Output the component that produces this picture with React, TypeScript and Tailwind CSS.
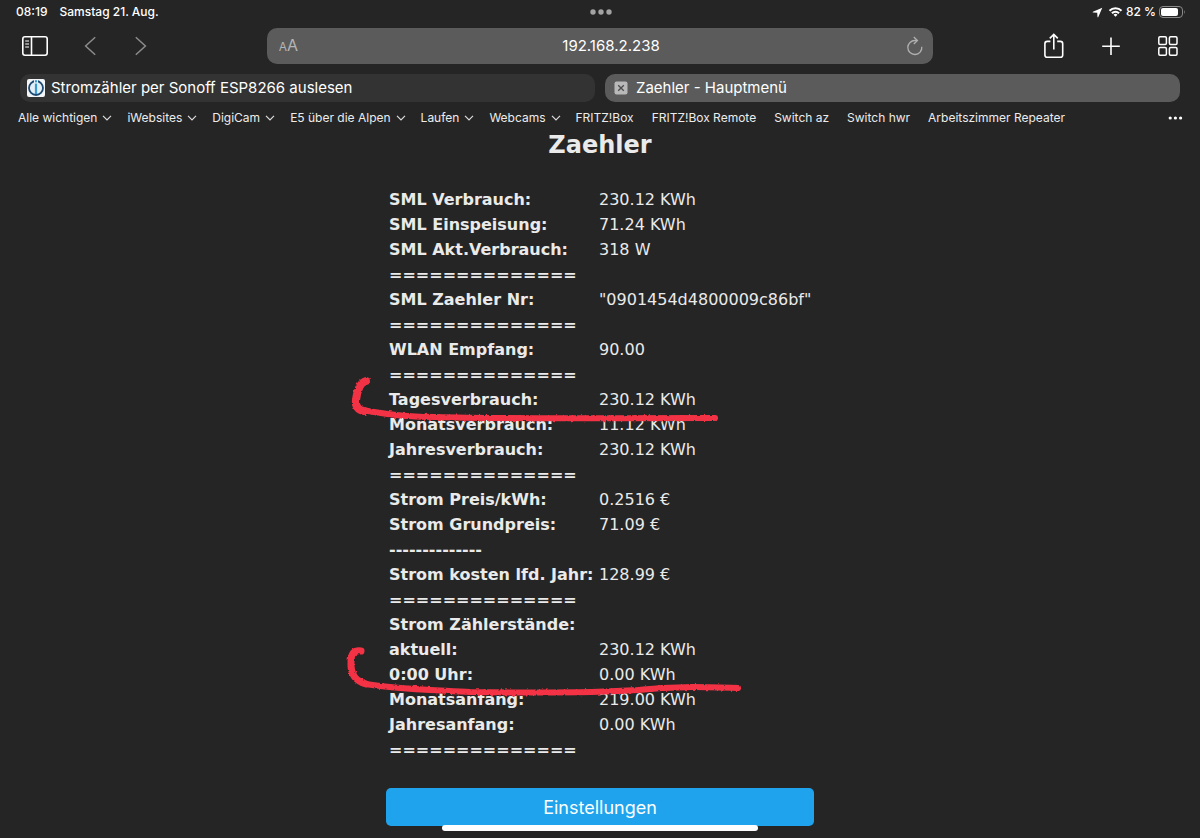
import React from 'react';

interface Bookmark {
  name: string;
  folder?: boolean;
}

interface Reading {
  label: string;
  value?: string;
}

const bookmarks: Bookmark[] = [
  { name: 'Alle wichtigen', folder: true },
  { name: 'iWebsites', folder: true },
  { name: 'DigiCam', folder: true },
  { name: 'E5 über die Alpen', folder: true },
  { name: 'Laufen', folder: true },
  { name: 'Webcams', folder: true },
  { name: 'FRITZ!Box' },
  { name: 'FRITZ!Box Remote' },
  { name: 'Switch az' },
  { name: 'Switch hwr' },
  { name: 'Arbeitszimmer Repeater' },
];

const readings: Reading[] = [
  { label: 'SML Verbrauch:', value: '230.12 KWh' },
  { label: 'SML Einspeisung:', value: '71.24 KWh' },
  { label: 'SML Akt.Verbrauch:', value: '318 W' },
  { label: '==============' },
  { label: 'SML Zaehler Nr:', value: '"0901454d4800009c86bf"' },
  { label: '==============' },
  { label: 'WLAN Empfang:', value: '90.00' },
  { label: '==============' },
  { label: 'Tagesverbrauch:', value: '230.12 KWh' },
  { label: 'Monatsverbrauch:', value: '11.12 KWh' },
  { label: 'Jahresverbrauch:', value: '230.12 KWh' },
  { label: '==============' },
  { label: 'Strom Preis/kWh:', value: '0.2516 €' },
  { label: 'Strom Grundpreis:', value: '71.09 €' },
  { label: '--------------' },
  { label: 'Strom kosten lfd. Jahr:', value: '128.99 €' },
  { label: '==============' },
  { label: 'Strom Zählerstände:' },
  { label: 'aktuell:', value: '230.12 KWh' },
  { label: '0:00 Uhr:', value: '0.00 KWh' },
  { label: 'Monatsanfang:', value: '219.00 KWh' },
  { label: 'Jahresanfang:', value: '0.00 KWh' },
  { label: '==============' },
];

function StatusBar() {
  return (
    <div className="grid h-6 grid-cols-3 items-center pr-[14px] pl-4 text-[12px] font-medium">
      <div className="flex gap-3">
        <span>08:19</span>
        <span>Samstag 21. Aug.</span>
      </div>
      <svg className="justify-self-center" width="22" height="6" fill="#a3a3a3">
        <circle cx="3" cy="3" r="2.7" />
        <circle cx="11" cy="3" r="2.7" />
        <circle cx="19" cy="3" r="2.7" />
      </svg>
      <div className="flex items-center justify-end gap-[3px]">
        <svg className="mr-[2px]" width="11" height="11" viewBox="0 0 11 11" fill="#fff">
          <path d="M10.3 0.7 L0.9 4.7 Q0.3 5.2 1 5.5 L5.2 5.8 L5.5 10 Q5.8 10.8 6.3 10.1 Z" />
        </svg>
        <svg width="15" height="12" viewBox="0 0 16 12" fill="none" stroke="#fff" strokeWidth="2.2">
          <path d="M1.6 4.7 A9 9 0 0 1 14.4 4.7" />
          <path d="M4.2 7.4 A5.4 5.4 0 0 1 11.8 7.4" />
          <path d="M8 11 L5.9 9 A3 3 0 0 1 10.1 9 Z" fill="#fff" stroke="none" />
        </svg>
        <span>82 %</span>
        <svg width="27" height="12" viewBox="0 0 27 12">
          <rect x="0.5" y="0.5" width="23" height="11" rx="3.5" fill="none" stroke="#8a8a8a" />
          <rect x="2" y="2" width="17" height="8" rx="2" fill="#fff" />
          <path d="M25 4 Q26.6 6 25 8 Z" fill="#8a8a8a" />
        </svg>
      </div>
    </div>
  );
}

function Toolbar() {
  return (
    <div className="mt-1 grid h-9 grid-cols-[2fr_5fr_2fr] items-center">
      <div className="flex items-center gap-9 pl-[22px]">
        <button aria-label="Seitenleiste">
          <svg width="26" height="20" viewBox="0 0 26 20" fill="none" stroke="#fff" strokeWidth="1.6">
            <rect x="0.8" y="0.8" width="24.4" height="18.4" rx="2.2" />
            <path d="M9.5 1 V19" />
            <path d="M3.2 5 H7 M3.2 8 H7 M3.2 11 H7" strokeWidth="1.2" />
          </svg>
        </button>
        <button aria-label="Zurück">
          <svg width="14" height="20" viewBox="0 0 14 20" fill="none" stroke="#8c8c8c" strokeWidth="1.5">
            <path d="M11.2 1.2 L1.6 10 L11.2 18.8" />
          </svg>
        </button>
        <button aria-label="Vorwärts">
          <svg width="14" height="20" viewBox="0 0 14 20" fill="none" stroke="#8c8c8c" strokeWidth="1.5">
            <path d="M1.8 1.2 L11.4 10 L1.8 18.8" />
          </svg>
        </button>
      </div>

      <div className="flex h-9 items-center rounded-[10px] bg-[#5b5b5b] pr-[10px] pl-3">
        <button aria-label="Darstellung" className="w-6 text-left leading-5 text-[#b4b4b4]">
          <span className="text-[12px]">A</span>
          <span className="text-[16px]">A</span>
        </button>
        <input
          aria-label="Adresse"
          className="min-w-0 flex-1 bg-transparent pt-px pl-3 text-center text-[15px] text-white outline-none"
          defaultValue="192.168.2.238"
        />
        <button aria-label="Neu laden">
          <svg width="16" height="20" viewBox="0 0 16 20" fill="none" stroke="#b0b0b0" strokeWidth="1.3">
            <path d="M14.8 10.8 A7 7 0 1 1 8.2 4.5 H10" />
            <path d="M6.8 1 L10.4 4.5 L6.8 8" />
          </svg>
        </button>
      </div>

      <div className="flex items-center justify-end gap-9 pr-[22px]">
        <button aria-label="Teilen">
          <svg width="22" height="26" viewBox="0 0 22 26" fill="none" stroke="#fff" strokeWidth="1.6">
            <path d="M6.4 8.4 H3.2 Q0.9 8.4 0.9 10.7 V21.9 Q0.9 24.2 3.2 24.2 H16.4 Q18.7 24.2 18.7 21.9 V10.7 Q18.7 8.4 16.4 8.4 H13.2" />
            <path d="M9.8 16.4 V1.6 M5.8 5.4 L9.8 1.4 L13.8 5.4" />
          </svg>
        </button>
        <button aria-label="Neuer Tab">
          <svg width="20" height="20" viewBox="0 0 20 20" stroke="#fff" strokeWidth="1.6">
            <path d="M9 1.4 V19 M0.2 10.2 H17.8" />
          </svg>
        </button>
        <button aria-label="Tabübersicht">
          <svg width="20" height="20" viewBox="0 0 20 20" fill="none" stroke="#fff" strokeWidth="1.5">
            <rect x="0.8" y="0.8" width="7.6" height="7.6" rx="1.2" />
            <rect x="11.4" y="0.8" width="7.6" height="7.6" rx="1.2" />
            <rect x="0.8" y="11.6" width="7.6" height="7.6" rx="1.2" />
            <rect x="11.4" y="11.6" width="7.6" height="7.6" rx="1.2" />
          </svg>
        </button>
      </div>
    </div>
  );
}

function Tabs() {
  return (
    <div className="mt-[10px] grid grid-cols-2 gap-[10px] px-5 text-[15px]">
      <button className="flex h-7 items-center gap-[6px] rounded-[10px] bg-[#333333] px-[7px]">
        <svg width="18" height="18" viewBox="0 0 18 18">
          <rect width="18" height="18" rx="2" fill="#f3f6f8" />
          <circle cx="9" cy="9" r="7" fill="#e4eff6" stroke="#1d4a73" strokeWidth="1.8" />
          <path d="M9 1 V4" stroke="#f3f6f8" strokeWidth="4" />
          <path d="M9 4.6 V15" stroke="#3a9bd2" strokeWidth="2.2" />
          <path d="M9 1.2 V3.4" stroke="#3a9bd2" strokeWidth="2.2" />
        </svg>
        <span className="pt-px">Stromzähler per Sonoff ESP8266 auslesen</span>
      </button>
      <div className="flex h-7 items-center gap-2 rounded-[10px] bg-[#5b5b5b] px-[9px]">
        <button aria-label="Tab schließen">
          <svg width="14" height="14" viewBox="0 0 14 14">
            <rect x="0.5" y="0.5" width="13" height="13" rx="2" fill="#b9b9b9" />
            <path d="M4.2 4.2 L9.8 9.8 M9.8 4.2 L4.2 9.8" stroke="#4c4c4c" strokeWidth="1.3" />
          </svg>
        </button>
        <span className="pt-px">Zaehler - Hauptmenü</span>
      </div>
    </div>
  );
}

function BookmarkBar() {
  return (
    <nav className="flex h-7 items-center pt-1 pr-4 pl-[18px] text-[12px] text-[#ececec]">
      {bookmarks.map((b) => (
        <a key={b.name} href="#" className={b.folder ? 'mr-[15px] flex items-center gap-[5px]' : 'mr-[18px]'}>
          {b.name}
          {b.folder && (
            <svg width="10" height="6" viewBox="0 0 10 6" fill="none" stroke="#dcdcdc" strokeWidth="1.2">
              <path d="M1 0.8 L5 4.8 L9 0.8" />
            </svg>
          )}
        </a>
      ))}
      <button aria-label="Mehr" className="ml-auto">
        <svg width="16" height="4" viewBox="0 0 16 4" fill="#fff">
          <circle cx="2.2" cy="2" r="1.6" />
          <circle cx="7.4" cy="2" r="1.6" />
          <circle cx="12.6" cy="2" r="1.6" />
        </svg>
      </button>
    </nav>
  );
}

// Red pencil marks over the table
function Markup() {
  return (
    <svg className="pointer-events-none absolute top-0 left-0 h-full w-full overflow-visible" aria-hidden="true">
      <defs>
        <filter id="pencil" filterUnits="userSpaceOnUse" x="-60" y="230" width="460" height="350">
          <feTurbulence type="fractalNoise" baseFrequency="0.4" numOctaves="1" seed="4" />
          <feDisplacementMap in="SourceGraphic" scale="3" xChannelSelector="R" yChannelSelector="G" />
        </filter>
      </defs>
      <g fill="none" stroke="#f43345" strokeLinecap="round" strokeLinejoin="round" filter="url(#pencil)">
        <path d="M-20 251 C-27 253 -29 262 -30 270 C-31 276 -28 280 -22 281" strokeWidth="8" />
        <path d="M-24 280 C-10 282 10 287 50 287 C110 289 200 288 329 288" strokeWidth="6" />
        <path d="M-25 521 C-36 519 -35 530 -35 536 C-34 547 -29 551 -20 554" strokeWidth="7" />
        <path d="M-24 553 C0 559 50 560 84 562 C150 563 220 562 252 560 C290 556 315 557 352 558" strokeWidth="6" />
      </g>
    </svg>
  );
}

export default function App() {
  return (
    <div className="relative min-h-screen bg-[#252525] font-['Inter',sans-serif] text-white">
      <header>
        <StatusBar />
        <Toolbar />
        <Tabs />
        <BookmarkBar />
      </header>

      <main className="relative mx-auto w-[428px] pb-[11px] text-[#eaeaea]">
        <h1 className="text-center font-['DejaVu_Sans',sans-serif] text-[24px] leading-[31px] font-bold">Zaehler</h1>
        <table className="mt-[26px] ml-[3px] w-[425px] table-fixed border-collapse font-['DejaVu_Sans',sans-serif] text-[16px] leading-[25px]">
          <tbody>
            {readings.map((r, i) => (
              <tr key={i}>
                <th scope="row" className="w-[210px] p-0 text-left font-bold whitespace-nowrap">{r.label}</th>
                <td className="p-0 whitespace-nowrap">{r.value}</td>
              </tr>
            ))}
          </tbody>
        </table>
        <button className="mt-[26px] h-[38px] w-full rounded-[5px] bg-[#1fa3ec] pt-px text-[18px] text-[#faffff]">
          Einstellungen
        </button>
        <Markup />
      </main>

      <div className="absolute bottom-[7px] left-1/2 h-[6px] w-[316px] -translate-x-1/2 rounded-full bg-white" />
    </div>
  );
}
